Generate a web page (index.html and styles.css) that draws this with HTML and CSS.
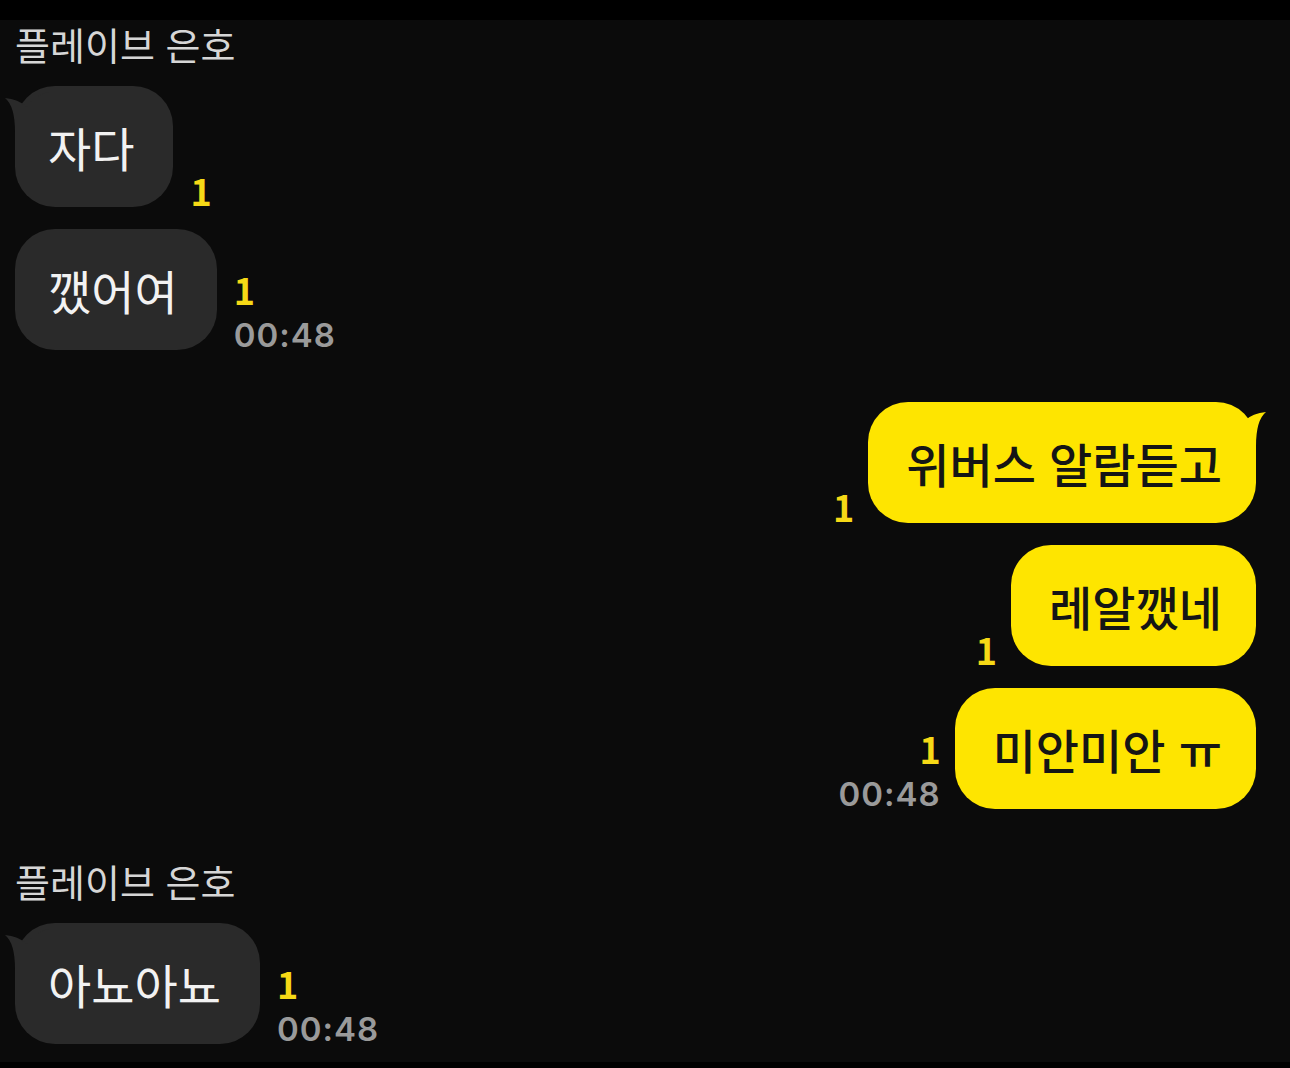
FILE: index.html
```html
<!DOCTYPE html>
<html lang="ko">

<head>
    <meta charset="UTF-8">
    <meta name="viewport" content="width=device-width, initial-scale=1.0">
    <title>채팅</title>
    <link rel="stylesheet" href="styles.css">
</head>

<body>
    <div class="statusbar"></div>
    <div class="chat">
        <!-- 받은 메시지 -->
        <div class="name">플레이브 은호</div>
        <div class="row in first">
            <div class="bubble">
                <svg class="tail" width="44" height="40" viewBox="0 0 44 40">
                    <path d="M0 6 Q13 7 22 15 Q30 3 44 0 L44 40 L10 40 Q10 14 0 6 Z" />
                </svg>
                자다
            </div>
            <div class="meta">
                <span class="unread">1</span>
            </div>
        </div>
        <div class="row in">
            <div class="bubble">깼어여</div>
            <div class="meta">
                <span class="unread">1</span>
                <span class="time">00:48</span>
            </div>
        </div>

        <!-- 보낸 메시지 -->
        <div class="row out first-out">
            <div class="meta">
                <span class="unread">1</span>
            </div>
            <div class="bubble">
                <svg class="tail" width="44" height="40" viewBox="0 0 44 40">
                    <path d="M0 6 Q13 7 22 15 Q30 3 44 0 L44 40 L10 40 Q10 14 0 6 Z" />
                </svg>
                위버스 알람듣고
            </div>
        </div>
        <div class="row out">
            <div class="meta">
                <span class="unread">1</span>
            </div>
            <div class="bubble">레알깼네</div>
        </div>
        <div class="row out">
            <div class="meta">
                <span class="unread">1</span>
                <span class="time">00:48</span>
            </div>
            <div class="bubble">미안미안 ㅠ</div>
        </div>

        <div class="name second">플레이브 은호</div>
        <div class="row in first">
            <div class="bubble">
                <svg class="tail" width="44" height="40" viewBox="0 0 44 40">
                    <path d="M0 6 Q13 7 22 15 Q30 3 44 0 L44 40 L10 40 Q10 14 0 6 Z" />
                </svg>
                아뇨아뇨
            </div>
            <div class="meta">
                <span class="unread">1</span>
                <span class="time">00:48</span>
            </div>
        </div>
    </div>
</body>

</html>
```

FILE: styles.css
```css
* {
    padding: 0;
    margin: 0;
    box-sizing: border-box;
}

body {
    width: 1290px;
    height: 1068px;
    overflow: hidden;
    background: #000;
    font-family: "Noto Sans CJK KR", "Noto Sans", sans-serif;
}

.statusbar {
    height: 20px;
    background: #000;
}

.chat {
    height: 1042px;
    background: #0b0b0b;
    padding: 0 34px 0 15px;
    display: flex;
    flex-direction: column;
}

.name {
    height: 44px;
    margin-top: 2px;
    font-size: 38px;
    line-height: 44px;
    color: #d6d6d6;
}

.name.second {
    margin-top: 50px;
}

.row {
    display: flex;
    align-items: flex-end;
    gap: 17px;
    margin-top: 22px;
}

.row.first {
    margin-top: 20px;
}

.row.first-out {
    margin-top: 52px;
}

.row.out {
    justify-content: flex-end;
    gap: 14px;
}

.bubble {
    position: relative;
    height: 121px;
    padding: 0 39px 0 33px;
    border-radius: 40px;
    display: flex;
    align-items: center;
    font-size: 47px;
    white-space: nowrap;
    background: #2a2a2a;
    color: #f2f2f2;
}

.row.out .bubble {
    padding: 0 34px 0 38px;
    background: #fee500;
    color: #151515;
    font-weight: 500;
}

.tail {
    position: absolute;
    top: 6px;
    left: -10px;
    fill: #2a2a2a;
}

.row.out .tail {
    left: auto;
    right: -10px;
    top: 4px;
    transform: scaleX(-1);
    fill: #fee500;
}

.meta {
    display: flex;
    flex-direction: column;
    align-items: flex-start;
    gap: 14px;
}

.row.out .meta {
    align-items: flex-end;
}

.unread {
    font-size: 36px;
    line-height: 34px;
    font-weight: 700;
    color: #f6d916;
}

.time {
    font-family: "Inter", "Liberation Sans", sans-serif;
    font-size: 33px;
    line-height: 30px;
    font-weight: 600;
    letter-spacing: 1px;
    color: #9a9a9a;
}
```
